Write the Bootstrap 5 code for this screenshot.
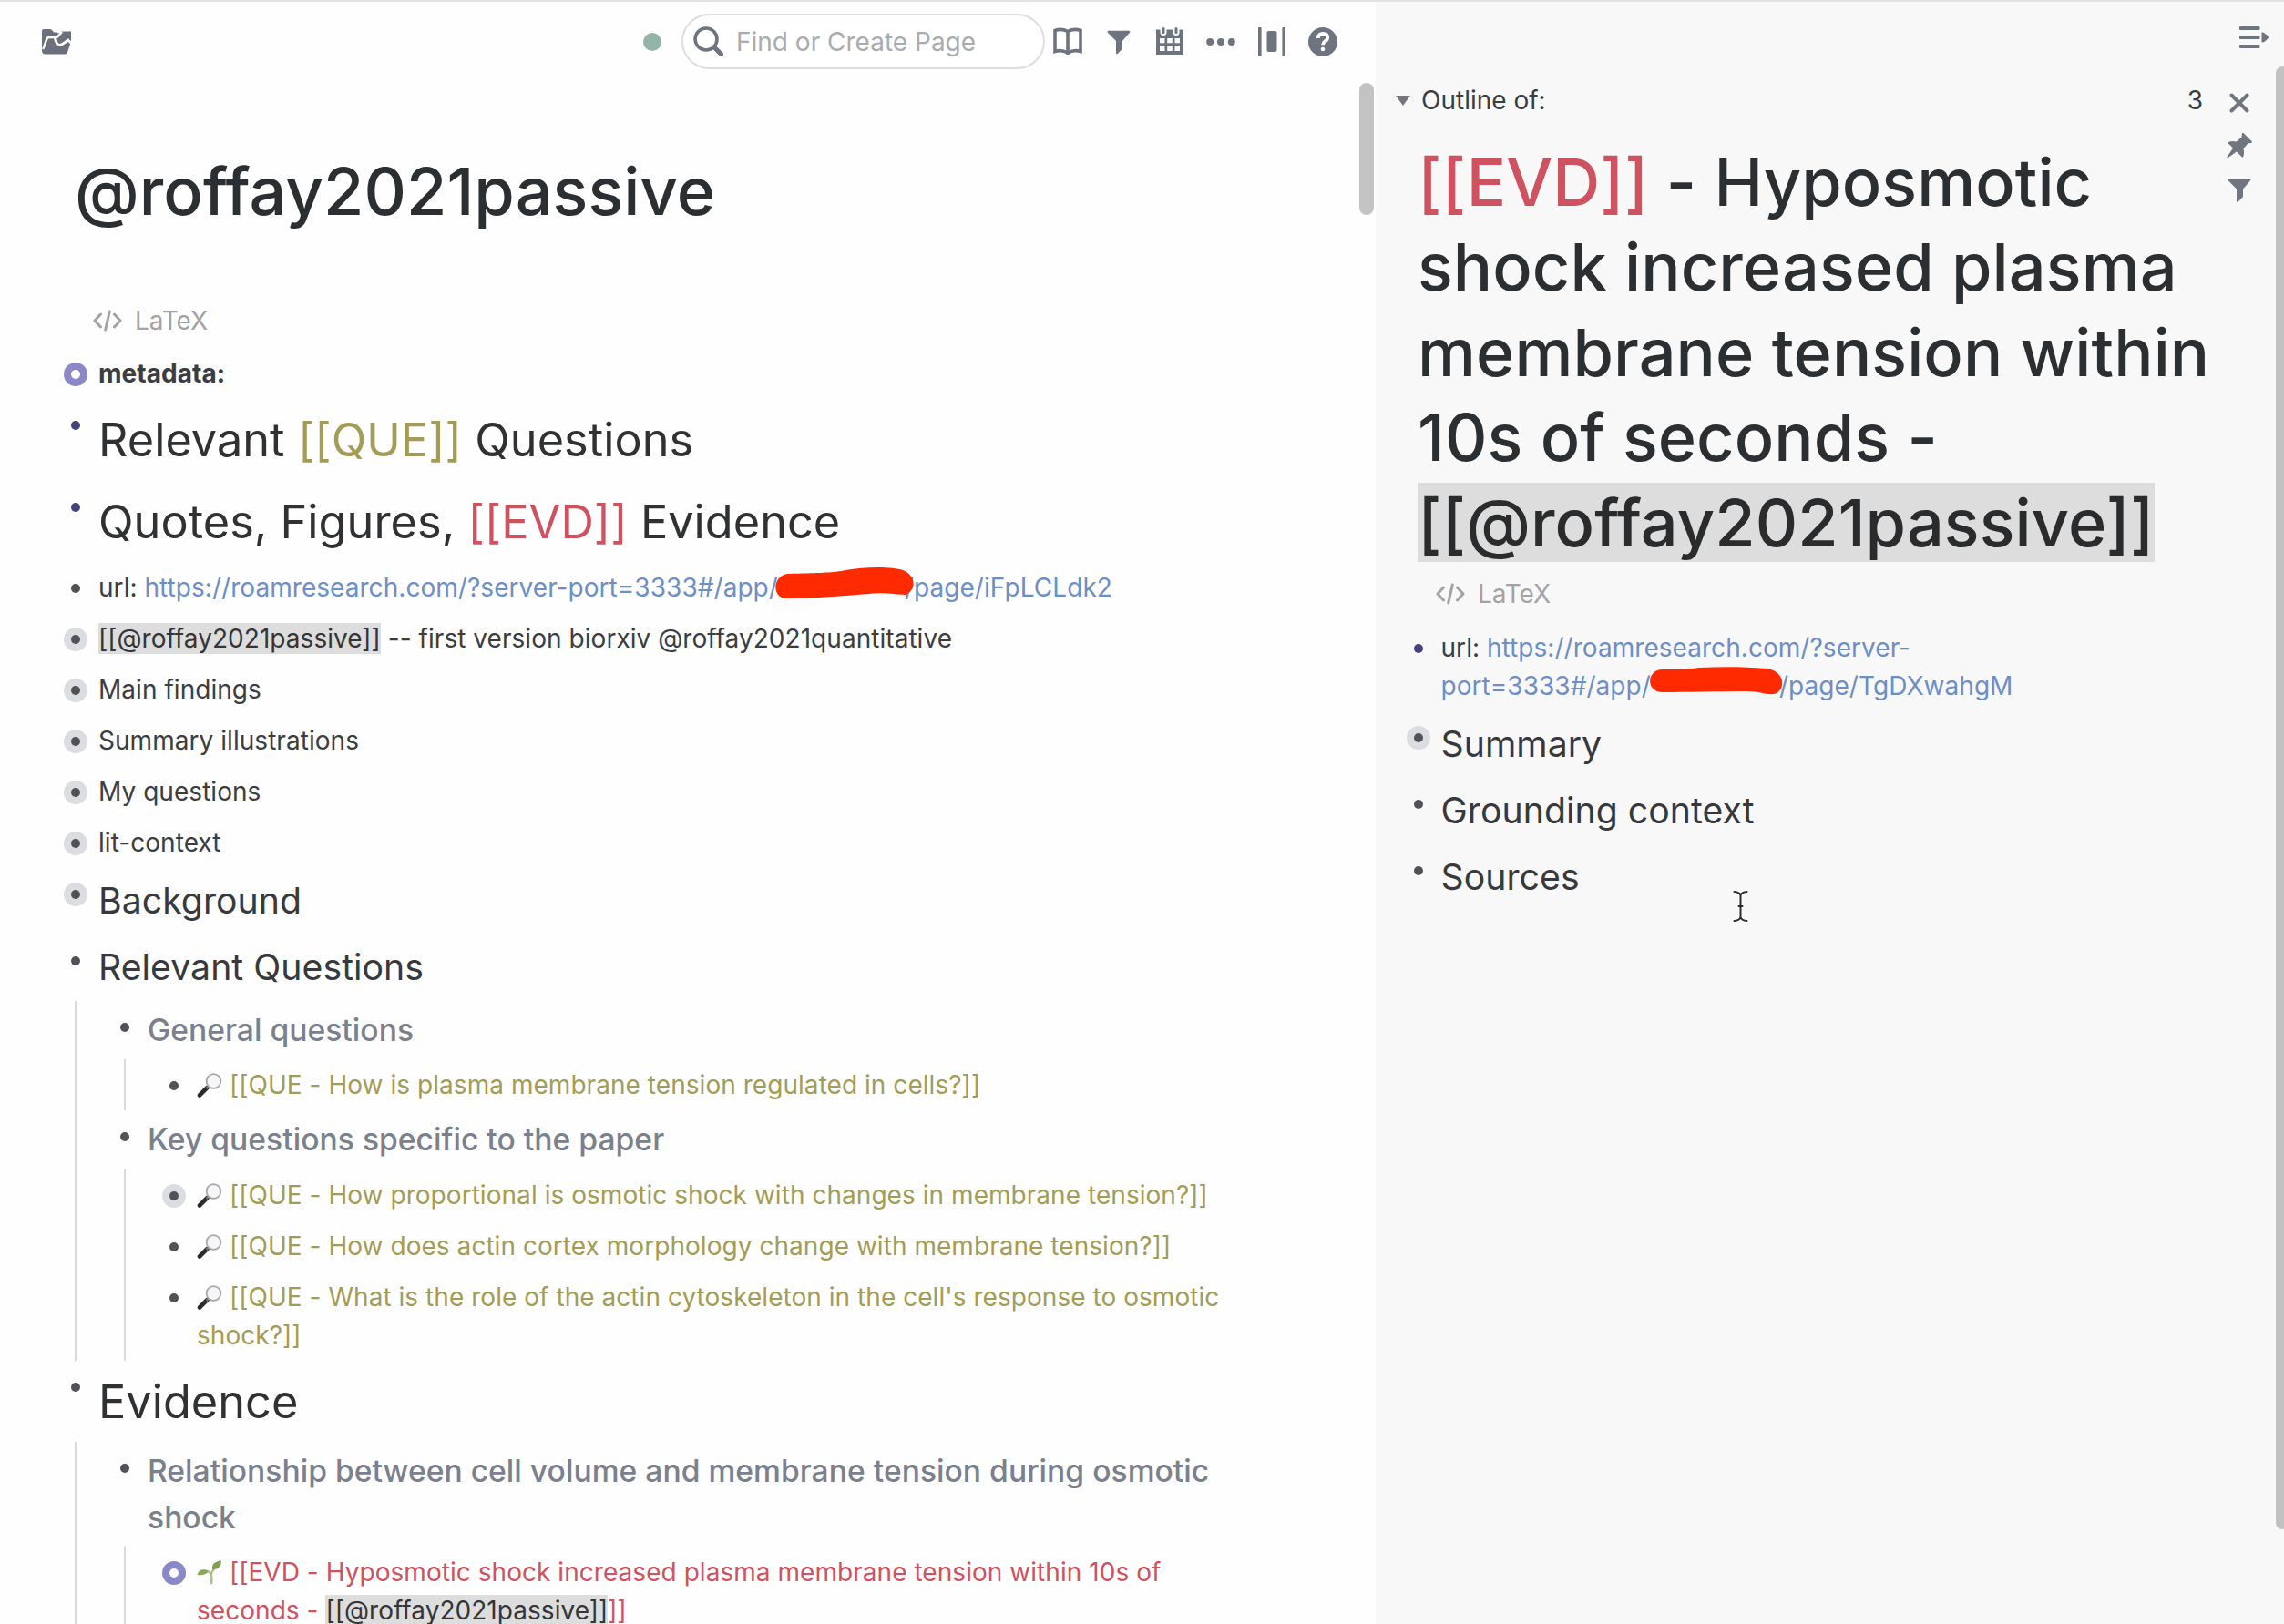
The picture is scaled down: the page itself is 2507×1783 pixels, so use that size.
<!DOCTYPE html>
<html lang="en">
<head>
<meta charset="utf-8">
<title>@roffay2021passive</title>
<link href="https://cdn.jsdelivr.net/npm/bootstrap@5.3.0/dist/css/bootstrap.min.css" rel="stylesheet">
<style>
  body { font-family: Inter, "Liberation Sans", sans-serif; font-size: 28px; line-height: 1.5; color: #3b3d40; background: #fefefe; height: 1783px; overflow: hidden; }
  .frame { height: 1783px; border-top: 2px solid #e2e2e2; }
  .main-pane { width: 1510px; }
  .side-pane { background: #f8f8f9; }
  .top-bar { padding: 13px 42px 0 46px; height: 74px; }
  .sync-dot { width: 20px; height: 20px; background: #93b5a8; margin-right: 22px; }
  .find-box { width: 399px; height: 61px; border: 2px solid #dcdddd; border-radius: 31px; padding: 0 11px; margin-right: 9px; gap: 14px; color: #a9acae; background: #fff; }
  .tool-icons { gap: 24px; color: #6d7480; }
  .page-title { font-size: 72px; font-weight: 500; line-height: 1.3; letter-spacing: .08px; color: #2c2f32; margin: 0; }
  .main-pane .page-title { padding: 87px 0 0 82px; }
  .latex-row { color: #a3a3a5; gap: 14px; }
  .main-pane .latex-row { margin-top: 74px; padding-left: 102px; }
  .side-pane .latex-row { margin-top: 11px; padding-left: 20px; }
  .outline-list { width: 1272px; margin: 9.4px 0 0 108px; }
  .side-list { margin: 9.5px 0 0 25.5px; }
  .blk { padding: 7px 0; position: relative; letter-spacing: .045px; }
  .kids { padding-left: 54px; position: relative; }
  .kids::before { content: ""; position: absolute; left: -26px; top: 0; bottom: 0; width: 2px; background: #d9dadc; }
  .dot { position: absolute; left: -38px; top: 16px; width: 26px; height: 26px; border-radius: 50%; display: flex; align-items: center; justify-content: center; }
  .dot::after { content: ""; width: 10px; height: 10px; border-radius: 50%; background: #505257; }
  .dot.navy::after { background: #44437e; }
  .dot.shut { background: #dcdde0; }
  .dot.ring { background: #8a88c6; }
  .dot.ring::after { background: #fff; }
  .h-one { font-size: 50.4px; color: #2f3133; }
  .h-two { font-size: 39.2px; color: #37393c; }
  .h-three { font-size: 33.6px; font-weight: 500; color: #7a808c; }
  .que { color: #a39c56; }
  .evd { color: #cf5260; }
  .url { color: #6d8ec6; }
  .cite { background: #dddddd; color: #333537; }
  .page-title .cite { color: #2a2b2d; }
  .emo { width: 28px; height: 27px; display: inline-block; vertical-align: -4px; }
  .gap-red { display: inline-block; position: relative; height: 20px; }
  .gap-red svg { position: absolute; }
  .scroll-a { position: absolute; left: 1492px; top: 91px; width: 16px; height: 145px; border-radius: 8px; background: #c3c3c3; }
  .scroll-b { position: absolute; left: 2498px; top: 73px; width: 14px; height: 1606px; border-radius: 7px; background: #c3c2c3; }
  .ibeam { position: absolute; left: 1901px; top: 977px; }
  .side-top { height: 87px; padding: 26px 16px 0 0; color: #6d7480; }
  .side-body { padding-left: 22px; }
  .side-content { width: 880px; }
  .block-count { padding-right: 18px; }
  .side-title { padding-top: 21.5px; }
  .side-tools { padding-top: 13px; color: #70757f; width: 28px; gap: 22px; margin-left: 8px; }
</style>
</head>
<body>
<svg class="d-none">
  <symbol id="lens" viewBox="0 0 27 27"><path d="M2.5 24.5 11 16" stroke="#2c2c2e" stroke-width="4.6" stroke-linecap="round"/><path d="M10 17l3-3" stroke="#77797c" stroke-width="2.5"/><circle cx="18" cy="9" r="7.8" fill="#f6f6f8" stroke="#a8a8ac" stroke-width="1.8"/></symbol>
  <symbol id="funnel" viewBox="0 0 26 26"><path d="M1.5 0h23q1.5.8.5 2.2L17 11.500V20l-5.500 5.800q-1.200.4-1.500-.8V11.500L.8 2.200Q0 .8 1.500 0z" fill="currentColor"/></symbol>
  <symbol id="code" viewBox="0 0 32 24"><g fill="none" stroke="currentColor" stroke-width="3" stroke-linecap="round" stroke-linejoin="round"><path d="M8.500 5 2 12l6.500 7M23.500 5 30 12l-6.500 7M18.300 2l-4.600 20"/></g></symbol>
</svg>
<div class="frame d-flex">
  <main class="main-pane flex-shrink-0">
    <header class="top-bar d-flex align-items-center">
      <svg class="me-auto" width="33" height="28" viewBox="0 0 33 28"><path d="M0 2Q0 0 2 0h7q1.500 0 2.500 1.500L13 3.500h19v10L28 25.500q-.6 2-2.500 2H4Q0 27.500 0 23.500z" fill="#6b707c"/><path d="M1.200 22 5.500 10.500Q6 9 8 9h8.500" fill="none" stroke="#fefefe" stroke-width="2.400"/><path d="M14.500 9q1 9.500 8 7.500l6.500-4.500 4 4" fill="none" stroke="#fefefe" stroke-width="3"/><path d="M17 3l5 0-6 6.500" fill="none" stroke="#fefefe" stroke-width="2.500"/><path d="M19.500 13.500 28 5.500" stroke="#6b707c" stroke-width="4.500" stroke-linecap="round"/><path d="M21.500 2.500H32V13z" fill="#6b707c"/></svg>
      <span class="sync-dot rounded-circle"></span>
      <div class="find-box d-flex align-items-center">
        <svg width="33" height="33" viewBox="0 0 33 33" fill="none" stroke="#6d7480"><circle cx="14" cy="14" r="12" stroke-width="3.600"/><path d="m23 23 7.500 7.500" stroke-width="5" stroke-linecap="round"/></svg>
        <span>Find or Create Page</span>
      </div>
      <div class="tool-icons d-flex align-items-center">
        <svg width="32" height="32" viewBox="0 0 32 32" fill="none" stroke="currentColor" stroke-width="3.600"><path d="M16 4.500Q9 .8 2 3.500v23q7-2.300 14 1.500 7-3.800 14-1.500v-23Q23 .8 16 4.500zV30"/></svg>
        <svg width="32" height="32" viewBox="0 0 32 32"><use href="#funnel" x="3" y="3.500" width="26" height="26"/></svg>
        <svg width="32" height="32" viewBox="0 0 32 32" fill="currentColor"><path fill-rule="evenodd" d="M1 2.500h30V30H1zM5 12v5.300h5.500V12zm8.200 0v5.300h5.600V12zm8.300 0v5.300H27V12zM5 20v6h5.500v-6zm8.200 0v6h5.600v-6zm8.300 0v6H27v-6z"/><path d="M9 0v5.500M23 0v5.500" stroke="#fefefe" stroke-width="7" stroke-linecap="round"/><path d="M9 1.500v4M23 1.500v4" stroke="currentColor" stroke-width="3" stroke-linecap="round"/></svg>
        <svg width="32" height="32" viewBox="0 0 32 32" fill="currentColor"><circle cx="4.200" cy="16" r="4"/><circle cx="16" cy="16" r="4"/><circle cx="27.800" cy="16" r="4"/></svg>
        <svg width="32" height="32" viewBox="0 0 32 32" fill="currentColor"><rect x="1" y="0" width="3.600" height="32" rx="1"/><rect x="27.400" y="0" width="3.600" height="32" rx="1"/><rect x="10.500" y="4" width="11" height="23" rx="2"/></svg>
        <svg width="32" height="32" viewBox="0 0 32 32"><circle cx="16" cy="16" r="16" fill="currentColor"/><path d="M10.800 12q.2-5 5.400-5 5 0 5 4.200 0 2.500-3 4.300-2.200 1.500-2.200 3.700" fill="none" stroke="#fefefe" stroke-width="3.800"/><circle cx="16" cy="24" r="2.300" fill="#fefefe"/></svg>
      </div>
    </header>

    <h1 class="page-title">@roffay2021passive</h1>
    <div class="latex-row d-flex align-items-center"><svg width="32" height="24"><use href="#code"/></svg><span>LaTeX</span></div>

    <div class="outline-list">
      <div class="blk fw-bold"><i class="dot ring"></i>metadata:</div>
      <div class="blk h-one"><i class="dot navy"></i>Relevant <span class="que">[[QUE]]</span> Questions</div>
      <div class="blk h-one"><i class="dot navy"></i>Quotes, Figures, <span class="evd">[[EVD]]</span> Evidence</div>
      <div class="blk text-nowrap"><i class="dot"></i>url: <span class="url">https://roamresearch.com/?server-port=3333#/app/<span class="gap-red" style="width:139px"><svg style="left:-3px;top:-12px" width="152" height="35" viewBox="0 0 152 35"><path d="M13 7C45 6 58 6 72 4 96-1 128-1 140 3c15 6 15 22 3 27-12 0-22-3-40-1-30 2-58 5-92 5C-4 32-3 10 13 7z" fill="#ff2a00"/></svg></span>/page/iFpLCLdk2</span></div>
      <div class="blk"><i class="dot shut"></i><span class="cite">[[@roffay2021passive]]</span> -- first version biorxiv @roffay2021quantitative</div>
      <div class="blk"><i class="dot shut"></i>Main findings</div>
      <div class="blk"><i class="dot shut"></i>Summary illustrations</div>
      <div class="blk"><i class="dot shut"></i>My questions</div>
      <div class="blk"><i class="dot shut"></i>lit-context</div>
      <div class="blk h-two"><i class="dot shut"></i>Background</div>
      <div class="blk h-two"><i class="dot"></i>Relevant Questions</div>
      <div class="kids">
        <div class="blk h-three"><i class="dot"></i>General questions</div>
        <div class="kids">
          <div class="blk que"><i class="dot"></i><svg class="emo"><use href="#lens"/></svg> [[QUE - How is plasma membrane tension regulated in cells?]]</div>
        </div>
        <div class="blk h-three"><i class="dot"></i>Key questions specific to the paper</div>
        <div class="kids">
          <div class="blk que"><i class="dot shut"></i><svg class="emo"><use href="#lens"/></svg> [[QUE - How proportional is osmotic shock with changes in membrane tension?]]</div>
          <div class="blk que"><i class="dot"></i><svg class="emo"><use href="#lens"/></svg> [[QUE - How does actin cortex morphology change with membrane tension?]]</div>
          <div class="blk que"><i class="dot"></i><svg class="emo"><use href="#lens"/></svg> [[QUE - What is the role of the actin cytoskeleton in the cell's response to osmotic shock?]]</div>
        </div>
      </div>
      <div class="blk h-one"><i class="dot"></i>Evidence</div>
      <div class="kids">
        <div class="blk h-three"><i class="dot"></i>Relationship between cell volume and membrane tension during osmotic shock</div>
        <div class="kids">
          <div class="blk evd"><i class="dot ring"></i><svg class="emo" viewBox="0 0 27 27"><path d="M15.500 26Q17 15 12.500 12.500M15 16q1-4 4-7" fill="none" stroke="#a9bf85" stroke-width="2.400"/><path d="M0 16Q2 7.500 13 11.500 9 17.500 0 16z" fill="#8aa65b"/><path d="M26 0Q28 9 17 10.500 14 3 26 0z" fill="#7fa052"/></svg> [[EVD - Hyposmotic shock increased plasma membrane tension within 10s of seconds - <span class="cite">[[@roffay2021passive]]</span>]]</div>
        </div>
      </div>
    </div>
  </main>

  <aside class="side-pane flex-grow-1">
    <div class="side-top d-flex justify-content-end align-items-start">
      <svg width="33" height="26" viewBox="0 0 33 26" fill="currentColor"><rect y="1" width="22.500" height="4" rx="1"/><rect y="11" width="22.500" height="4" rx="1"/><rect y="21" width="22.500" height="4" rx="1"/><path d="M24.500 7.500q3-.5 8 5.500-5 6-8 5.500z"/></svg>
    </div>
    <div class="side-body d-flex">
      <svg width="16" height="11" viewBox="0 0 16 11" style="margin-top:16px"><path d="M0 0h16L8 11z" fill="#75777b"/></svg>
      <div class="side-content" style="margin-left:8px">
        <div class="d-flex justify-content-between"><span style="margin-left:4px">Outline of:</span><span class="block-count">3</span></div>
        <h2 class="page-title side-title"><span class="evd">[[EVD]]</span> - Hyposmotic shock increased plasma membrane tension within 10s of seconds - <span class="cite">[[@roffay2021passive]]</span></h2>
        <div class="latex-row d-flex align-items-center"><svg width="32" height="24"><use href="#code"/></svg><span>LaTeX</span></div>
        <div class="side-list">
          <div class="blk"><i class="dot navy"></i>url: <span class="url">https://roamresearch.com/?server-<br>port=3333#/app/<span class="gap-red" style="width:141px"><svg style="left:-1px;top:-11px" width="145" height="31" viewBox="0 0 145 31"><path d="M14 3c20 0 26 0 40-2 25-1 50-1 74 1 22 3 21 25 8 28-10 1-14-3-30-3-34 0-64 1-92 1C-5 28-4 3 14 3z" fill="#ff2a00"/></svg></span>/page/TgDXwahgM</span></div>
          <div class="blk h-two"><i class="dot shut"></i>Summary</div>
          <div class="blk h-two"><i class="dot"></i>Grounding context</div>
          <div class="blk h-two"><i class="dot"></i>Sources</div>
        </div>
      </div>
      <div class="side-tools d-flex flex-column align-items-center">
        <svg class="flex-shrink-0" width="22" height="22" viewBox="0 0 22 22"><path d="m2.500 2.500 17 17m0-17-17 17" stroke="currentColor" stroke-width="4" stroke-linecap="round"/></svg>
        <svg class="flex-shrink-0" width="28" height="28" viewBox="0 0 28 28" fill="currentColor"><path d="M17 0q1-.5 2 .5L27.500 9q1 1.500-.5 2l-3.500.2-5 6Q20 23.500 17.500 27L11 20.500 1 27.500 0 27l7-10.500L1 10.500Q4.500 8 10.500 9.500l6-5z"/></svg>
        <svg class="flex-shrink-0" width="26" height="26"><use href="#funnel"/></svg>
      </div>
    </div>
  </aside>
</div>
<div class="scroll-a"></div>
<div class="scroll-b"></div>
<svg class="ibeam" width="19" height="36" viewBox="0 0 19 36"><g fill="none" stroke-linecap="round"><path d="M2.500 2q6 .5 7 4 1-3.500 7-4M9.500 6v24M2.500 34q6-.5 7-4 1 3.500 7 4M6.500 18h6" stroke="#fff" stroke-width="4"/><path d="M2.500 2q6 .5 7 4 1-3.500 7-4M9.500 6v24M2.500 34q6-.5 7-4 1 3.500 7 4M7.500 18h4" stroke="#2a2a2c" stroke-width="2"/></g></svg>
<script src="https://cdn.jsdelivr.net/npm/bootstrap@5.3.0/dist/js/bootstrap.bundle.min.js"></script>
</body>
</html>
